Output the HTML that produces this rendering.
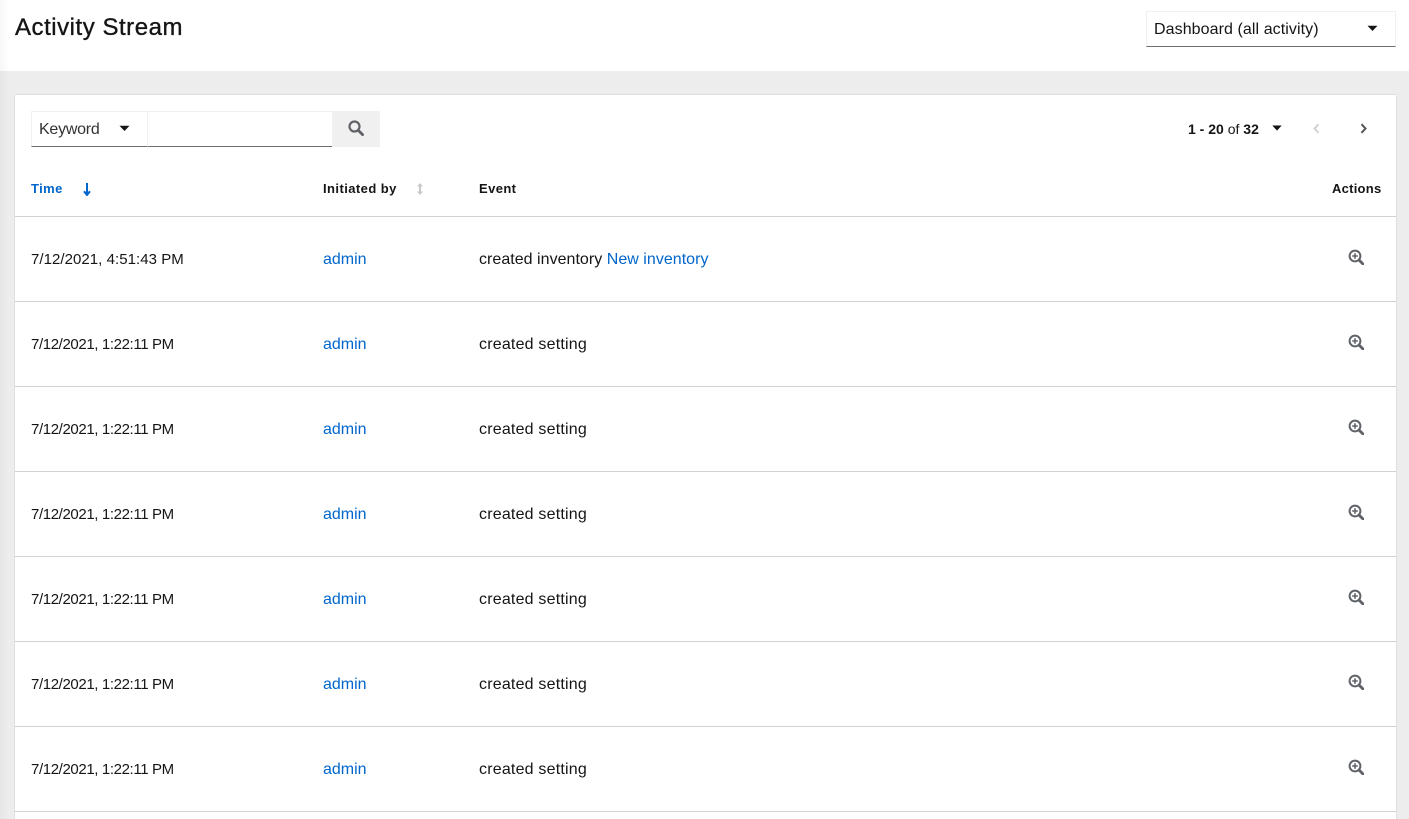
<!DOCTYPE html>
<html lang="en">
<head>
<meta charset="utf-8">
<title>Activity Stream</title>
<style>
html,body{margin:0;padding:0;width:1409px;height:819px;overflow:hidden;background:#ededed;font-family:"Liberation Sans",sans-serif;color:#151515;font-size:16px}
.abs,.t{position:absolute}
.t{white-space:nowrap;line-height:20px}
a{color:#06c;text-decoration:none}
.hdr{left:0;top:0;width:1409px;height:71px;background:#fff}
.shadow{left:0;top:0;width:9px;height:819px;background:linear-gradient(to right,rgba(0,0,0,.03),rgba(0,0,0,0))}
.card{left:15px;top:95px;width:1381px;height:724px;background:#fff;box-shadow:0 0 1px rgba(0,0,0,.3)}
.line{left:15px;width:1381px;height:1px;background:#d2d2d2}
.th{font-size:13px;font-weight:bold;letter-spacing:.4px}
.td{font-size:16px;letter-spacing:.2px}
.d{font-size:15px;letter-spacing:-.38px}
.n{font-size:15px;letter-spacing:.05px}
.a{letter-spacing:0}
.i{letter-spacing:.03px}
svg{position:absolute;display:block}
</style>
</head>
<body>
<div class="abs hdr"></div>
<div class="abs card"></div>
<div class="abs shadow"></div>

<div class="t" style="left:15px;top:14px;font-size:24px;line-height:28px;letter-spacing:.53px;-webkit-text-stroke:.35px #151515">Activity Stream</div>

<div class="abs" style="left:1146px;top:11px;width:250px;height:36px;box-sizing:border-box;border:1px solid #f0f0f0;border-bottom:1px solid #6a6e73"></div>
<div class="t td" style="left:1154px;top:20px;letter-spacing:.08px">Dashboard (all activity)</div>
<svg style="left:1367px;top:25px" width="11" height="7" viewBox="0 0 11 7"><path d="M.5 .8h10L5.5 6z" fill="#151515"/></svg>

<div class="abs" style="left:31px;top:111px;width:117px;height:36px;box-sizing:border-box;border:1px solid #f0f0f0;border-bottom:1px solid #6a6e73"></div>
<div class="t td" style="left:39px;top:120px;color:#333;letter-spacing:-.25px">Keyword</div>
<svg style="left:119px;top:125px" width="11" height="7" viewBox="0 0 11 7"><path d="M.5 .8h10L5.5 6z" fill="#151515"/></svg>
<div class="abs" style="left:147px;top:111px;width:185px;height:36px;box-sizing:border-box;border-top:1px solid #f0f0f0;border-left:1px solid #f0f0f0;border-bottom:1px solid #6a6e73"></div>
<div class="abs" style="left:332px;top:111px;width:48px;height:36px;background:#f0f0f0"></div>
<svg style="left:348px;top:120px" width="16" height="16" viewBox="0 0 16 16"><circle cx="6.5" cy="6.5" r="5" fill="none" stroke="#5f6368" stroke-width="2.2"/><path d="M10.2 10.2L14.6 14.6" stroke="#5f6368" stroke-width="2.8" stroke-linecap="round"/></svg>

<div class="t" style="left:1188px;top:119px;font-size:14px"><b>1 - 20</b> of <b>32</b></div>
<svg style="left:1272px;top:125px" width="10" height="6" viewBox="0 0 10 6"><path d="M.3 .5h9.4L5 5.6z" fill="#151515"/></svg>
<svg style="left:1312px;top:123px" width="9" height="11" viewBox="0 0 9 11"><path d="M6.5 1.2L2.5 5.5L6.5 9.8" fill="none" stroke="#d2d2d2" stroke-width="2"/></svg>
<svg style="left:1359px;top:123px" width="9" height="11" viewBox="0 0 9 11"><path d="M2.5 1.2L6.5 5.5L2.5 9.8" fill="none" stroke="#555" stroke-width="2"/></svg>

<div class="t th" style="left:31px;top:179px;color:#06c">Time</div>
<svg style="left:82px;top:182px" width="10" height="14" viewBox="0 0 10 14"><path d="M5 1V12M2 9.2L5 13L8 9.2" fill="none" stroke="#06c" stroke-width="2"/></svg>
<div class="t th" style="left:323px;top:179px;letter-spacing:.43px">Initiated by</div>
<svg style="left:415px;top:182px" width="10" height="14" viewBox="0 0 10 14"><path d="M5 2V12" stroke="#c8c8c8" stroke-width="2"/><path d="M2 4.5L5 1L8 4.5zM2 9.5L5 13L8 9.5z" fill="#c8c8c8"/></svg>
<div class="t th" style="left:479px;top:179px">Event</div>
<div class="t th" style="left:1332px;top:179px;letter-spacing:.25px">Actions</div>

<div class="abs line" style="top:216px"></div>
<div class="abs line" style="top:301px"></div>
<div class="abs line" style="top:386px"></div>
<div class="abs line" style="top:471px"></div>
<div class="abs line" style="top:556px"></div>
<div class="abs line" style="top:641px"></div>
<div class="abs line" style="top:726px"></div>
<div class="abs line" style="top:811px"></div>

<svg width="0" height="0" style="left:0;top:0"><defs><g id="z"><circle cx="7" cy="7" r="5.4" fill="none" stroke="#5f6368" stroke-width="2"/><path d="M11 11L15 15" stroke="#5f6368" stroke-width="2.8" stroke-linecap="round"/><path d="M4.2 7H9.8M7 4.2V9.8" stroke="#5f6368" stroke-width="1.6"/></g></defs></svg>

<div class="t td n" style="left:31px;top:250px">7/12/2021, 4:51:43 PM</div>
<div class="t td a" style="left:323px;top:250px"><a>admin</a></div>
<div class="t td i" style="left:479px;top:250px">created inventory <a>New inventory</a></div>
<svg style="left:1348px;top:249px" width="16" height="16" viewBox="0 0 16 16"><use href="#z"/></svg>

<div class="t td d" style="left:31px;top:335px">7/12/2021, 1:22:11 PM</div>
<div class="t td a" style="left:323px;top:335px"><a>admin</a></div>
<div class="t td" style="left:479px;top:335px">created setting</div>
<svg style="left:1348px;top:334px" width="16" height="16" viewBox="0 0 16 16"><use href="#z"/></svg>

<div class="t td d" style="left:31px;top:420px">7/12/2021, 1:22:11 PM</div>
<div class="t td a" style="left:323px;top:420px"><a>admin</a></div>
<div class="t td" style="left:479px;top:420px">created setting</div>
<svg style="left:1348px;top:419px" width="16" height="16" viewBox="0 0 16 16"><use href="#z"/></svg>

<div class="t td d" style="left:31px;top:505px">7/12/2021, 1:22:11 PM</div>
<div class="t td a" style="left:323px;top:505px"><a>admin</a></div>
<div class="t td" style="left:479px;top:505px">created setting</div>
<svg style="left:1348px;top:504px" width="16" height="16" viewBox="0 0 16 16"><use href="#z"/></svg>

<div class="t td d" style="left:31px;top:590px">7/12/2021, 1:22:11 PM</div>
<div class="t td a" style="left:323px;top:590px"><a>admin</a></div>
<div class="t td" style="left:479px;top:590px">created setting</div>
<svg style="left:1348px;top:589px" width="16" height="16" viewBox="0 0 16 16"><use href="#z"/></svg>

<div class="t td d" style="left:31px;top:675px">7/12/2021, 1:22:11 PM</div>
<div class="t td a" style="left:323px;top:675px"><a>admin</a></div>
<div class="t td" style="left:479px;top:675px">created setting</div>
<svg style="left:1348px;top:674px" width="16" height="16" viewBox="0 0 16 16"><use href="#z"/></svg>

<div class="t td d" style="left:31px;top:760px">7/12/2021, 1:22:11 PM</div>
<div class="t td a" style="left:323px;top:760px"><a>admin</a></div>
<div class="t td" style="left:479px;top:760px">created setting</div>
<svg style="left:1348px;top:759px" width="16" height="16" viewBox="0 0 16 16"><use href="#z"/></svg>
</body>
</html>
